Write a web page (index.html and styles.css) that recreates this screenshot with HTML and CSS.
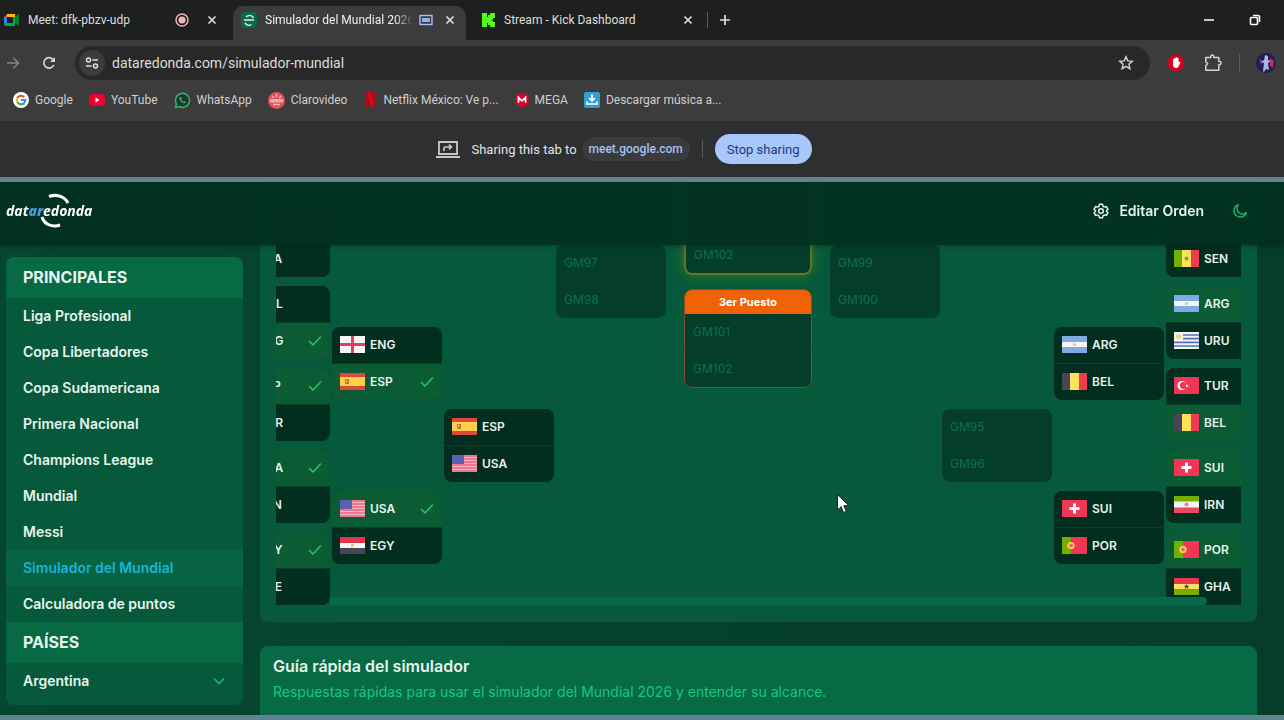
FILE: index.html
```html
<!DOCTYPE html>
<html lang="es">
<head>
  <meta charset="UTF-8" />
  <meta name="viewport" content="width=device-width, initial-scale=1.0"/>
  <title>Simulador del Mundial 2026</title>
  <link rel="stylesheet" href="styles.css">
</head>
<body>

  <!-- Flags and shared icons -->
  <svg class="sprite" aria-hidden="true">
    <symbol id="check" viewBox="0 0 14 12"><path d="M1.5 6.5 5 10 12.5 2" fill="none" stroke="#22c55e" stroke-width="1.6" stroke-linecap="round" stroke-linejoin="round"/></symbol>
    <symbol id="close" viewBox="0 0 10 10"><path d="M1.5 1.5l7 7M8.5 1.5l-7 7" stroke="#dedede" stroke-width="1.7"/></symbol>
    <symbol id="eng" viewBox="0 0 25 17"><path fill="#f5f5f5" d="M0 0h25v17H0z"/><path fill="#e0405e" d="M11 0h3v17h-3zM0 7h25v3H0z"/></symbol>
    <symbol id="esp" viewBox="0 0 25 17"><path fill="#dd4838" d="M0 0h25v17H0z"/><path fill="#ffd04c" d="M0 4h25v9H0z"/><path fill="#c8744a" d="M5 6h4v5H5z"/><path fill="#ffd04c" d="M6 7h1v2H6z"/></symbol>
    <symbol id="usa" viewBox="0 0 25 17"><path fill="#f4b4c0" d="M0 0h25v17H0z"/><path stroke="#ea6680" stroke-width="1.4" d="M0 1h25M0 4h25M0 7h25M0 10h25M0 13h25M0 16h25"/><path fill="#5a62b0" d="M0 0h12v9H0z"/></symbol>
    <symbol id="egy" viewBox="0 0 25 17"><path fill="#f5f5f5" d="M0 0h25v17H0z"/><path fill="#e6354f" d="M0 0h25v6H0z"/><path fill="#464655" d="M0 11h25v6H0z"/><path fill="#e8c98a" d="M11 7h3v3h-3z"/></symbol>
    <symbol id="sen" viewBox="0 0 25 17"><path fill="#73af00" d="M0 0h9v17H0z"/><path fill="#ffe15a" d="M8 0h9v17H8z"/><path fill="#ee3a52" d="M17 0h8v17h-8z"/><circle cx="12.5" cy="8.5" r="2" fill="#9a9c2b"/></symbol>
    <symbol id="arg" viewBox="0 0 25 17"><path fill="#7fabe2" d="M0 0h25v17H0z"/><path fill="#f5f5f5" d="M0 6h25v5H0z"/><circle cx="12.5" cy="8.5" r="1.5" fill="#e0c795"/></symbol>
    <symbol id="uru" viewBox="0 0 25 17"><path fill="#f5f5f5" d="M0 0h25v17H0z"/><path stroke="#5370b8" stroke-width="1.7" d="M0 3h25M0 6.7h25M0 10.4h25M0 14h25"/><path fill="#f5f5f5" d="M0 0h9v9H0z"/><circle cx="4.5" cy="4.5" r="2.6" fill="#ecd977"/></symbol>
    <symbol id="tur" viewBox="0 0 25 17"><path fill="#ef3655" d="M0 0h25v17H0z"/><circle cx="8" cy="8.5" r="4.5" fill="#fff"/><circle cx="9.4" cy="8.5" r="3.6" fill="#ef3655"/><path fill="#fff" d="M12 7l1 1h2l-1.5 1 .3 1.5L12 9.5z"/></symbol>
    <symbol id="bel" viewBox="0 0 25 17"><path fill="#464655" d="M0 0h9v17H0z"/><path fill="#ffe15a" d="M8 0h9v17H8z"/><path fill="#ee3a52" d="M17 0h8v17h-8z"/></symbol>
    <symbol id="sui" viewBox="0 0 25 17"><path fill="#ef3655" d="M0 0h25v17H0z"/><path fill="#fff" d="M11 3.500h3V7h3.500v3H14v3.500h-3V10H7.500V7H11z"/></symbol>
    <symbol id="irn" viewBox="0 0 25 17"><path fill="#f5f5f5" d="M0 0h25v17H0z"/><path fill="#73af00" d="M0 0h25v5.500H0z"/><path fill="#e94a63" d="M0 11.500h25V17H0z"/><circle cx="12.5" cy="8.5" r="2" fill="#ee7d8d"/></symbol>
    <symbol id="por" viewBox="0 0 25 17"><path fill="#ef3655" d="M0 0h25v17H0z"/><path fill="#73af00" d="M0 0h9v17H0z"/><circle cx="9" cy="8.5" r="3.6" fill="#ffd75a"/><circle cx="9" cy="8.5" r="2" fill="#ee6a6a"/></symbol>
    <symbol id="gha" viewBox="0 0 25 17"><path fill="#ffe15a" d="M0 0h25v17H0z"/><path fill="#e6354f" d="M0 0h25v6H0z"/><path fill="#73af00" d="M0 11h25v6H0z"/><path fill="#464655" d="M12.500 6l.9 1.700h1.900l-1.500 1.200.6 2-1.900-1.200-1.900 1.200.6-2-1.500-1.200h1.900z"/></symbol>
  </svg>

  <!-- Browser -->
  <div class="tabs">
    <div class="tab">
      <svg class="tab-icon" viewBox="0 0 16 16"><path fill="#2684fc" d="M0 5h3v7H0z"/><path fill="#ea4335" d="M3 2v3H0z"/><path fill="#ffba00" d="M3 2h8v3H3z"/><path fill="#00ac47" d="M3 11h8v3H2a2 2 0 0 1-2-2v-1z"/><path fill="#00832d" d="M11 4l4-2v12l-4-3z"/><path fill="#00ac47" d="M9 5h2v6H9z"/></svg>
      <span class="tab-title">Meet: dfk-pbzv-udp</span>
      <svg class="tab-state" viewBox="0 0 14 14"><circle cx="7" cy="7" r="6" fill="none" stroke="#e9b4b4" stroke-width="1.5"/><circle cx="7" cy="7" r="3.6" fill="#f3b6b6"/></svg>
      <button class="icon-btn" aria-label="Cerrar"><svg width="10" height="10"><use href="#close"/></svg></button>
    </div>
    <div class="tab active">
      <svg class="tab-icon" viewBox="0 0 16 16"><rect width="16" height="16" rx="3" fill="#0b6a48"/><path d="M5 5c3-3 7-1 7.500 1M3 8h10M4 11c2 3 5 2.500 6.500 1.500" fill="none" stroke="#d9f0e6" stroke-width="1.4"/></svg>
      <span class="tab-title">Simulador del Mundial 2026</span>
      <svg class="tab-state" viewBox="0 0 14 14"><rect x="1" y="2.5" width="12" height="9" fill="none" stroke="#a9c2f5" stroke-width="1.4"/><rect x="3" y="5" width="8" height="4" fill="#8fb0f3"/></svg>
      <button class="icon-btn" aria-label="Cerrar"><svg width="10" height="10"><use href="#close"/></svg></button>
    </div>
    <div class="tab last">
      <svg class="tab-icon" viewBox="0 0 16 16"><path fill="#53fc18" d="M2 1h5v4h1V3h2V1h5v5h-2v2h-1v1h1v1h2v5h-5v-2H8v-2H7v4H2z"/></svg>
      <span class="tab-title">Stream - Kick Dashboard</span>
      <button class="icon-btn" aria-label="Cerrar"><svg width="10" height="10"><use href="#close"/></svg></button>
    </div>
    <span class="divider"></span>
    <button class="icon-btn new-tab" aria-label="Nueva pestaña"><svg width="12" height="12" viewBox="0 0 12 12"><path d="M6 1v10M1 6h10" stroke="#dedede" stroke-width="1.7"/></svg></button>
    <div class="window-buttons">
      <button class="icon-btn" aria-label="Minimizar"><svg width="12" height="12" viewBox="0 0 12 12"><path d="M1 6h10" stroke="#fff" stroke-width="1.5"/></svg></button>
      <button class="icon-btn" aria-label="Restaurar"><svg width="12" height="12" viewBox="0 0 12 12"><rect x="1.5" y="3.5" width="7" height="7" rx="1" fill="none" stroke="#fff" stroke-width="1.6"/><path d="M4 1.500h5a1.500 1.500 0 0 1 1.500 1.500v5" fill="none" stroke="#fff" stroke-width="1.6"/></svg></button>
    </div>
  </div>

  <div class="toolbar">
    <button class="icon-btn" aria-label="Adelante"><svg width="14" height="14" viewBox="0 0 14 14"><path d="M1 7h11M7.500 2l5 5-5 5" fill="none" stroke="#858585" stroke-width="1.5"/></svg></button>
    <button class="icon-btn reload" aria-label="Recargar"><svg width="14" height="14" viewBox="0 0 14 14"><path d="M11.800 9A5.200 5.200 0 1 1 11 3.500L12.500 5" fill="none" stroke="#d5d5d5" stroke-width="1.7"/><path d="M13 1v5H8z" fill="#d5d5d5"/></svg></button>
    <div class="address">
      <button class="site-info" aria-label="Información del sitio"><svg width="14" height="14" viewBox="0 0 14 14"><g fill="none" stroke="#dedede" stroke-width="1.5"><circle cx="3.5" cy="4" r="2"/><path d="M7.500 4H13M1 10h5.500"/><circle cx="10.5" cy="10" r="2"/></g></svg></button>
      <input type="text" aria-label="Dirección" value="dataredonda.com/simulador-mundial">
      <button class="icon-btn" aria-label="Favorito"><svg width="16" height="16" viewBox="0 0 16 16"><path d="M8 1.800l1.800 4.100 4.500.4-3.400 3 1 4.400L8 11.400l-3.900 2.300 1-4.400-3.400-3 4.500-.4z" fill="none" stroke="#d5d5d5" stroke-width="1.4"/></svg></button>
    </div>
    <button class="icon-btn" aria-label="Bloqueador"><svg width="18" height="18" viewBox="0 0 18 18"><circle cx="9" cy="9" r="8.5" fill="#d4001f"/><path d="M6 10V5.500q.7-.8 1.300 0V4.300q.8-.9 1.500 0V3.600q.8-.9 1.500 0v.9q.8-.8 1.300 0v4l1.200-.9.7.8-2.300 4.600L10 14H8l-2-2z" fill="#fff"/></svg></button>
    <button class="icon-btn extensions" aria-label="Extensiones"><svg width="18" height="18" viewBox="0 0 18 18"><path d="M1.800 3.500h5V2.600a1.500 1.500 0 0 1 3 0v.9h5v4h.7a1.600 1.600 0 0 1 0 3.200h-.7v5.500h-13v-4.500l2-2-2-2z" fill="none" stroke="#d5d5d5" stroke-width="1.5" stroke-linejoin="round"/></svg></button>
    <span class="divider"></span>
    <button class="icon-btn profile" aria-label="Perfil"><svg width="20" height="20" viewBox="0 0 20 20"><circle cx="10" cy="10" r="10" fill="#2a1a52"/><path d="M14 5l4 3-1 7-3-2z" fill="#b52e5c"/><path d="M3 6l4 2-2 4z" fill="#6a3cae"/><path d="M9 2l3 1v4l3 1-3 2 1 7-3-1-2 3-1-1 1-8-3-1 3-2z" fill="#a9b4ec"/></svg></button>
  </div>

  <nav class="bookmarks">
    <a href="#"><svg width="16" height="16" viewBox="0 0 16 16"><circle cx="8" cy="8" r="8" fill="#fff"/><g fill="none" stroke-width="2"><path d="M11.200 5A4.300 4.300 0 0 0 4.300 6" stroke="#ea4335"/><path d="M4.300 6a4.300 4.300 0 0 0 0 4" stroke="#fbbc05"/><path d="M4.300 10a4.300 4.300 0 0 0 6.500 1.400" stroke="#34a853"/><path d="M10.800 11.400A4.300 4.300 0 0 0 12.300 8H8" stroke="#4285f4"/></g></svg>Google</a>
    <a href="#"><svg width="16" height="16" viewBox="0 0 16 16"><rect y="2" width="16" height="12" rx="4" fill="#f0002f"/><path d="M6.500 5.500v5l4-2.500z" fill="#fff"/></svg>YouTube</a>
    <a href="#"><svg width="17" height="17" viewBox="0 0 17 17"><path d="M1.500 15.500l1-3.600a7 7 0 1 1 2.700 2.600z" fill="#1d3a2c" stroke="#35b46c" stroke-width="1.5"/><path d="M6 5c-1.500 1.500.5 4 1.500 5s3.500 2 4.500.5L10.500 9l-1 .7C8.500 9.300 7.700 8.500 7.300 7.600L8 6.700 7 5z" fill="#35b46c"/></svg>WhatsApp</a>
    <a href="#"><svg width="17" height="17" viewBox="0 0 17 17"><circle cx="8.5" cy="8.5" r="8.5" fill="#e2505a"/><path d="M4 4l2 2M13 4l-2 2M8.500 2v3M5 12.500h7" stroke="#f6bcc0" stroke-width="1.4"/><path d="M2 7h13v3.500H2z" fill="#f2a6ac"/></svg>Clarovideo</a>
    <a href="#" class="netflix"><svg width="14" height="16" viewBox="0 0 14 16"><path d="M2 0h10v16l-5-3-5 3z" fill="#b30713"/><path d="M4 0h3l4 12v3l-3-2z" fill="#d80a1a"/></svg>Netflix México: Ve p...</a>
    <a href="#"><svg width="14" height="14" viewBox="0 0 14 14"><circle cx="7" cy="7" r="7" fill="#d9042b"/><path d="M3.500 9.800V4.500L7 7.800l3.500-3.300v5.300" fill="none" stroke="#fff" stroke-width="1.7"/></svg>MEGA</a>
    <a href="#"><svg width="16" height="16" viewBox="0 0 16 16"><rect width="16" height="16" rx="2" fill="#2f9fd0"/><path d="M8 2.500v6M5 6l3 3 3-3M3 9.500V12h10V9.500" fill="none" stroke="#fff" stroke-width="1.7"/></svg>Descargar música a...</a>
  </nav>

  <div class="share-bar">
    <svg width="24" height="20" viewBox="0 0 24 20"><path d="M3 3h18v12H3z" fill="none" stroke="#c9c9c9" stroke-width="1.8"/><path d="M0 18h24" stroke="#c9c9c9" stroke-width="2"/><path d="M8 12V9.500A1.500 1.500 0 0 1 9.500 8H15M13 5.500L15.500 8 13 10.500" fill="none" stroke="#c9c9c9" stroke-width="1.7"/></svg>
    <span class="share-text">Sharing this tab to</span>
    <span class="share-host">meet.google.com</span>
    <span class="divider"></span>
    <button class="stop-btn">Stop sharing</button>
  </div>

  <!-- Page -->
  <div class="page">
    <header class="site-header">
      <a href="#" class="logo" aria-label="dataredonda">
        <svg class="logo-arcs" width="36" height="36" viewBox="0 0 36 36"><g fill="none" stroke="#fff" stroke-width="3"><path d="M12 3.500C20 .5 28 4 31 10"/><path d="M5 24c2 7 10 11 18 8"/></g></svg>
        <span class="logo-text">dat<b>ar</b>edonda</span>
      </a>
      <button class="edit-btn"><svg width="16" height="16" viewBox="0 0 24 24" fill="none" stroke="#e8f5ef" stroke-width="2.2" stroke-linejoin="round"><path d="M9.600 2h4.800l.7 3 2 1.200 3-.9 2.400 4.200-2.300 2.100v.8l2.300 2.100-2.400 4.200-3-.9-2 1.200-.7 3H9.600l-.7-3-2-1.200-3 .9-2.400-4.200 2.300-2.100v-.8L1.500 9.500l2.400-4.200 3 .9 2-1.200z"/><circle cx="12" cy="12" r="3.5"/></svg>Editar Orden</button>
      <button class="icon-btn theme-btn" aria-label="Tema"><svg width="16" height="16" viewBox="0 0 24 24"><path d="M21.500 14.500A9.500 9.500 0 1 1 9.500 2.500a8.500 8.500 0 0 0 12 12z" fill="none" stroke="#16b364" stroke-width="2.2" stroke-linejoin="round"/></svg></button>
    </header>

    <div class="layout">
      <aside class="sidebar">
        <h2>PRINCIPALES</h2>
        <a href="#">Liga Profesional</a>
        <a href="#">Copa Libertadores</a>
        <a href="#">Copa Sudamericana</a>
        <a href="#">Primera Nacional</a>
        <a href="#">Champions League</a>
        <a href="#">Mundial</a>
        <a href="#">Messi</a>
        <a href="#" class="current">Simulador del Mundial</a>
        <a href="#">Calculadora de puntos</a>
        <h2>PAÍSES</h2>
        <button class="country">Argentina <svg width="12" height="12" viewBox="0 0 12 12"><path d="M1.500 4L6 8.500 10.500 4" fill="none" stroke="#16b981" stroke-width="1.6" stroke-linecap="round"/></svg></button>
      </aside>

      <main class="content">
        <section class="panel">
          <div class="bracket-view">
            <div class="bracket">
              <div class="round">
                <div class="slot"></div>
                <div class="slot"></div>
                <div class="slot"></div>
                <div class="slot"><div class="match"><button class="team"></button><button class="team"><svg class="flag"></svg>RSA</button></div></div>
                <div class="slot"><div class="match"><button class="team"><svg class="flag"></svg>COL</button><button class="team win"><svg class="flag"><use href="#eng"/></svg>ENG<svg class="check"><use href="#check"/></svg></button></div></div>
                <div class="slot"><div class="match"><button class="team win"><svg class="flag"><use href="#esp"/></svg>ESP<svg class="check"><use href="#check"/></svg></button><button class="team"><svg class="flag"></svg>KOR</button></div></div>
                <div class="slot"><div class="match"><button class="team win"><svg class="flag"><use href="#usa"/></svg>USA<svg class="check"><use href="#check"/></svg></button><button class="team"><svg class="flag"></svg>JPN</button></div></div>
                <div class="slot"><div class="match"><button class="team win"><svg class="flag"><use href="#egy"/></svg>EGY<svg class="check"><use href="#check"/></svg></button><button class="team"><svg class="flag"></svg>CZE</button></div></div>
              </div>
              <div class="round">
                <div class="slot"></div>
                <div class="slot"></div>
                <div class="slot"><div class="match"><button class="team"><svg class="flag"><use href="#eng"/></svg>ENG</button><button class="team win"><svg class="flag"><use href="#esp"/></svg>ESP<svg class="check"><use href="#check"/></svg></button></div></div>
                <div class="slot"><div class="match"><button class="team win"><svg class="flag"><use href="#usa"/></svg>USA<svg class="check"><use href="#check"/></svg></button><button class="team"><svg class="flag"><use href="#egy"/></svg>EGY</button></div></div>
              </div>
              <div class="round">
                <div class="slot"></div>
                <div class="slot"><div class="match"><button class="team"><svg class="flag"><use href="#esp"/></svg>ESP</button><button class="team"><svg class="flag"><use href="#usa"/></svg>USA</button></div></div>
              </div>
              <div class="round">
                <div class="slot"><div class="match pending"><button class="team" disabled>GM97</button><button class="team" disabled>GM98</button></div></div>
              </div>
              <div class="round finals">
                <div class="match pending final"><button class="team" disabled></button><button class="team" disabled>GM102</button></div>
                <div class="match pending third"><h3>3er Puesto</h3><button class="team" disabled>GM101</button><button class="team" disabled>GM102</button></div>
              </div>
              <div class="round">
                <div class="slot"><div class="match pending"><button class="team" disabled>GM99</button><button class="team" disabled>GM100</button></div></div>
              </div>
              <div class="round">
                <div class="slot"></div>
                <div class="slot"><div class="match pending"><button class="team" disabled>GM95</button><button class="team" disabled>GM96</button></div></div>
              </div>
              <div class="round">
                <div class="slot"></div>
                <div class="slot"></div>
                <div class="slot"><div class="match"><button class="team"><svg class="flag"><use href="#arg"/></svg>ARG</button><button class="team"><svg class="flag"><use href="#bel"/></svg>BEL</button></div></div>
                <div class="slot"><div class="match"><button class="team"><svg class="flag"><use href="#sui"/></svg>SUI</button><button class="team"><svg class="flag"><use href="#por"/></svg>POR</button></div></div>
              </div>
              <div class="round">
                <div class="slot"></div>
                <div class="slot"></div>
                <div class="slot"></div>
                <div class="slot"><div class="match"><button class="team"></button><button class="team"><svg class="flag"><use href="#sen"/></svg>SEN</button></div></div>
                <div class="slot"><div class="match"><button class="team win"><svg class="flag"><use href="#arg"/></svg>ARG</button><button class="team"><svg class="flag"><use href="#uru"/></svg>URU</button></div></div>
                <div class="slot"><div class="match"><button class="team"><svg class="flag"><use href="#tur"/></svg>TUR</button><button class="team win"><svg class="flag"><use href="#bel"/></svg>BEL</button></div></div>
                <div class="slot"><div class="match"><button class="team win"><svg class="flag"><use href="#sui"/></svg>SUI</button><button class="team"><svg class="flag"><use href="#irn"/></svg>IRN</button></div></div>
                <div class="slot"><div class="match"><button class="team win"><svg class="flag"><use href="#por"/></svg>POR</button><button class="team"><svg class="flag"><use href="#gha"/></svg>GHA</button></div></div>
              </div>
            </div>
            <div class="scroll-thumb"></div>
          </div>
        </section>

        <section class="guide">
          <h2>Guía rápida del simulador</h2>
          <p>Respuestas rápidas para usar el simulador del Mundial 2026 y entender su alcance.</p>
        </section>
      </main>
    </div>
  </div>

  <svg class="cursor" width="14" height="22" viewBox="0 0 14 22" aria-hidden="true"><path d="M1.500 1.500v15.500l3.600-3.300 2.500 5.800 2.700-1.200-2.500-5.600h5z" fill="#fff" stroke="#222" stroke-width="1"/></svg>
</body>
</html>
```
FILE: styles.css
```css
* {
  box-sizing: border-box;
}

body {
  margin: 0;
  height: 100vh;
  display: flex;
  flex-direction: column;
  overflow: hidden;
  background: #053c2a;
  color: #e6f4ee;
  font-family: Roboto, "Open Sans", sans-serif;
  font-size: 12px;
}

button {
  font: inherit;
  color: inherit;
  border: none;
  background: none;
  padding: 0;
  cursor: pointer;
}

a {
  color: inherit;
  text-decoration: none;
}

h2, h3, p {
  margin: 0;
}

svg {
  flex: none;
}

.sprite {
  position: absolute;
  width: 0;
  height: 0;
}

.icon-btn {
  display: flex;
  align-items: center;
  justify-content: center;
}

.divider {
  width: 1px;
  height: 18px;
  background: #5c5d5d;
}

/* Browser */

.tabs {
  display: flex;
  align-items: flex-end;
  height: 40px;
  background: #1e1f1f;
  color: #dedede;
}

.tabs .divider {
  height: 16px;
  margin-bottom: 12px;
}

.tab {
  display: flex;
  align-items: center;
  width: 233px;
  height: 34px;
  padding: 0 16px 6px 4px;
}

.tab.active {
  padding: 0 11px 6px 8px;
  background: #3c3c3c;
  border-radius: 10px 10px 0 0;
  color: #f0f0f0;
}

.tab.last {
  width: 241px;
  padding: 0 14px 6px 14px;
}

.tab-icon {
  width: 16px;
  height: 16px;
  margin-right: 8px;
}

.tab-title {
  flex: 1;
  overflow: hidden;
  white-space: nowrap;
}

.active .tab-title {
  mask-image: linear-gradient(to right, #000 88%, transparent);
}

.tab-state {
  width: 14px;
  height: 14px;
  margin: 0 18px 0 6px;
}

.active .tab-state {
  margin-right: 12px;
}

.new-tab {
  height: 34px;
  padding: 0 11px 6px;
}

.window-buttons {
  display: flex;
  gap: 34px;
  height: 34px;
  margin-left: auto;
  padding: 0 23px 6px 0;
}

.toolbar {
  display: flex;
  align-items: center;
  height: 46px;
  padding: 0 9px 0 6px;
  background: #3c3c3c;
}

.reload {
  margin: 0 19px 0 22px;
}

.address {
  flex: 1;
  display: flex;
  align-items: center;
  height: 34px;
  padding: 0 16px 0 4px;
  margin-right: 17px;
  border-radius: 17px;
  background: #282828;
}

.site-info {
  display: flex;
  align-items: center;
  justify-content: center;
  width: 26px;
  height: 26px;
  border-radius: 13px;
  background: #3c3c3c;
}

.address input {
  flex: 1;
  min-width: 0;
  margin-left: 7px;
  padding: 0;
  border: none;
  outline: none;
  background: none;
  color: #dcdcdc;
  font: inherit;
  font-size: 14px;
}

.extensions {
  margin: 0 17px 0 19px;
}

.profile {
  margin-left: 16px;
  margin-right: -1px;
}

.bookmarks {
  display: flex;
  gap: 16px;
  height: 35px;
  padding: 0 0 7px 13px;
  background: #3c3c3c;
  color: #cfcfcf;
}

.bookmarks a {
  display: flex;
  align-items: center;
  gap: 6px;
  white-space: nowrap;
}

.share-bar {
  display: flex;
  align-items: center;
  justify-content: center;
  height: 56px;
  padding-right: 36px;
  background: #2e2f30;
  color: #e3e3e3;
  font-size: 13px;
}

.share-text {
  margin: 0 5px 0 11px;
}

.share-host {
  padding: 0 7px;
  border-radius: 12px;
  background: #3a3b3d;
  color: #a8c0f0;
  font-size: 12px;
  font-weight: 500;
  line-height: 24px;
}

.share-bar .divider {
  margin: 0 12px;
}

.stop-btn {
  height: 30px;
  padding: 0 12px;
  border-radius: 15px;
  background: #a8c7fa;
  color: #1c3c78;
}

/* Page */

.page {
  flex: 1;
  min-height: 0;
  overflow: hidden;
  border: solid #5f8490;
  border-width: 5px 0;
  background: linear-gradient(to right, #054630, #053c2a);
  font-family: Inter, sans-serif;
}

.site-header {
  position: relative;
  z-index: 2;
  display: flex;
  align-items: center;
  height: 63px;
  padding: 0 36px 6px 6px;
  background: rgba(2, 48, 34, 0.95);
  backdrop-filter: blur(4px);
  box-shadow: 0 1px 4px rgba(0, 30, 20, 0.5);
}

.logo {
  position: relative;
  margin-right: auto;
}

.logo-arcs {
  position: absolute;
  left: 31px;
  top: -8px;
}

.logo-text {
  position: relative;
  color: #fff;
  font-family: "Open Sans", sans-serif;
  font-size: 14px;
  font-style: italic;
  font-weight: 700;
  line-height: 20px;
}

.logo-text b {
  color: #4796d8;
}

.edit-btn {
  display: flex;
  align-items: center;
  gap: 10px;
  margin-right: 28px;
  font-size: 14px;
  font-weight: 600;
}

.layout {
  display: flex;
  align-items: flex-start;
  gap: 17px;
  padding: 12px 27px 0 6px;
}

.sidebar {
  width: 237px;
  flex: none;
  padding-bottom: 6px;
  border-radius: 8px;
  background: #065a3b;
  overflow: hidden;
  font-size: 14px;
  font-weight: 600;
}

.sidebar h2 {
  padding: 0 17px;
  background: #076a44;
  font-size: 16px;
  font-weight: 700;
  line-height: 41px;
}

.sidebar a {
  display: block;
  padding: 0 17px;
  line-height: 36px;
}

.sidebar .current {
  background: #076341;
  color: #18b4d8;
}

.country {
  display: flex;
  align-items: center;
  justify-content: space-between;
  width: 100%;
  padding: 0 18px 0 17px;
  line-height: 36px;
}

/* The page is scrolled down, so the top of the bracket sits under the header */
.content {
  flex: 1;
  min-width: 0;
  margin-top: -320px;
}

.panel {
  padding: 16px 16px 13px;
  border-radius: 8px;
  background: #065a3b;
}

.bracket-view {
  position: relative;
  overflow: hidden;
}

.bracket {
  display: flex;
  gap: 2px;
  width: 1056px;
  margin-left: -56px;
}

.round {
  display: flex;
  flex-direction: column;
  width: 110px;
  flex: none;
}

.slot {
  flex: 1;
  min-height: 82px;
  display: flex;
  flex-direction: column;
  justify-content: center;
}

.match {
  border-radius: 8px;
  background: #022e1f;
  overflow: hidden;
}

.team {
  display: flex;
  align-items: center;
  gap: 5px;
  width: 100%;
  height: 36px;
  padding: 0 8px;
  font-size: 12px;
  font-weight: 600;
}

.team + .team {
  height: 37px;
  border-top: 1px solid #06402b;
}

.team.win {
  background: #0b5c34;
}

.flag {
  width: 25px;
  height: 17px;
}

.check {
  width: 14px;
  height: 12px;
  margin-left: auto;
}

.pending {
  background: #043e2a;
}

.pending .team {
  color: #0c7049;
  font-weight: 400;
}

.finals {
  width: 128px;
  margin: 0 16px;
  justify-content: center;
  gap: 14px;
}

.final {
  padding-top: 23px;
  border: 2px solid #5d7a20;
  box-shadow: 0 0 12px rgba(130, 140, 20, 0.5);
}

.third {
  border: 1px solid #7d4c2a;
}

.third h3 {
  background: #f06205;
  color: #fff;
  font-size: 11px;
  font-weight: 700;
  line-height: 24px;
  text-align: center;
}

.scroll-thumb {
  position: absolute;
  left: 54px;
  right: 34px;
  bottom: 4px;
  height: 8px;
  border-radius: 0 4px 4px 0;
  background: #07694a;
}

.guide {
  margin-top: 24px;
  height: 240px;
  padding: 10px 13px;
  border-radius: 8px;
  background: #076a44;
}

.guide h2 {
  font-size: 16px;
  font-weight: 600;
  line-height: 20px;
}

.guide p {
  margin-top: 7px;
  color: #12c97f;
  font-size: 14px;
  line-height: 18px;
}

/* Mouse pointer over the page */
.cursor {
  position: absolute;
  left: 836px;
  top: 493px;
}
```
